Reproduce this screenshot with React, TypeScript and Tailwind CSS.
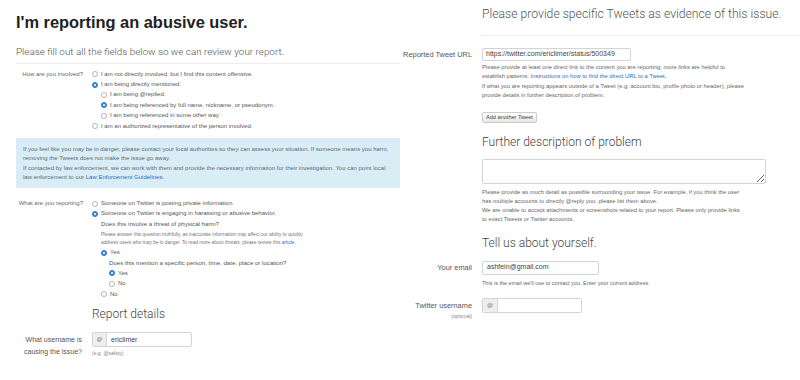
import React from 'react';

const Radio: React.FC<{ checked?: boolean }> = ({ checked }) =>
  checked ? (
    <span className="w-[6px] h-[6px] rounded-full bg-[#3b8bea] border border-[#2c74d1] flex items-center justify-center shrink-0">
      <span className="w-[2px] h-[2px] rounded-full bg-white" />
    </span>
  ) : (
    <span className="w-[6px] h-[6px] rounded-full bg-white border border-[#b5b5b5] shrink-0" />
  );

const RadioRow: React.FC<{ checked?: boolean; level?: number; children: React.ReactNode }> = ({
  checked,
  level = 0,
  children,
}) => {
  const indent = level === 0 ? 'pl-0' : level === 1 ? 'pl-[9px]' : 'pl-[17px]';
  return (
    <div className={`flex items-center h-[10.4px] gap-[3px] ${indent}`}>
      <Radio checked={checked} />
      <span className="whitespace-nowrap">{children}</span>
    </div>
  );
};

export default function App() {
  return (
    <div className="w-[800px] h-[380px] bg-white flex overflow-hidden font-['Liberation_Sans',Arial,sans-serif] text-[#555]">
      {/* LEFT: report form */}
      <div className="w-[400px] pl-[16px] flex flex-col">
        <h1 className="mt-[13px] text-[16.4px] leading-[18px] font-bold text-[#222]">
          I'm reporting an abusive user.
        </h1>
        <p className="mt-[15px] pb-[5px] border-b border-[#eeeeee] text-[9.9px] leading-[12px] font-['Roboto',sans-serif] font-light text-[#555]">
          Please fill out all the fields below so we can review your report.
        </p>

        {/* How are you involved */}
        <div className="flex mt-[5px] text-[6px]">
          <div className="w-[68px] pr-[1px] text-right h-[10.4px] leading-[10.4px] text-[#666]">How are you involved?</div>
          <div className="ml-[8px] flex flex-col">
            <RadioRow>I am not directly involved, but I find this content offensive.</RadioRow>
            <RadioRow checked>I am being directly mentioned.</RadioRow>
            <RadioRow level={1}>I am being @replied.</RadioRow>
            <RadioRow level={1} checked>
              I am being referenced by full name, nickname, or pseudonym.
            </RadioRow>
            <RadioRow level={1}>I am being referenced in some other way.</RadioRow>
            <RadioRow>I am an authorized representative of the person involved.</RadioRow>
          </div>
        </div>

        {/* Info box */}
        <div className="mt-[7px] h-[50px] bg-[#d9edf7] pl-[7px] pr-[4px] pt-[7px] text-[6px] leading-[9px] text-[#5f6b73] whitespace-nowrap">
          <p>
            If you feel like you may be in danger, please contact your local authorities so they can assess your
            situation. If someone means you harm,
            <br />
            removing the Tweets does not make the issue go away.
          </p>
          <p className="mt-[1px]">
            If contacted by law enforcement, we can work with them and provide the necessary information for their
            investigation. You can point local
            <br />
            law enforcement to our <span className="text-[#2a6ebb]">Law Enforcement Guidelines</span>.
          </p>
        </div>

        {/* What are you reporting */}
        <div className="flex mt-[10px] text-[6px]">
          <div className="w-[68px] pr-[1px] text-right h-[10.4px] leading-[10.4px] text-[#666]">What are you reporting?</div>
          <div className="ml-[8px] flex flex-col">
            <RadioRow>Someone on Twitter is posting private information.</RadioRow>
            <RadioRow checked>Someone on Twitter is engaging in harassing or abusive behavior.</RadioRow>
            <div className="pl-[9px] h-[10.4px] leading-[10.4px] text-[6.1px] text-[#555]">
              Does this involve a threat of physical harm?
            </div>
            <div className="pl-[9px] pt-[1px] pb-[1px] text-[4.8px] leading-[8px] text-[#777]">
              Please answer this question truthfully, as inaccurate information may affect our ability to quickly
              <br />
              address users who may be in danger. To read more about threats, please review this{' '}
              <span className="text-[#2a6ebb]">article</span>.
            </div>
            <RadioRow level={1} checked>
              Yes
            </RadioRow>
            <div className="pl-[17px] h-[10.4px] leading-[10.4px] text-[6.1px] text-[#555]">
              Does this mention a specific person, time, date, place or location?
            </div>
            <RadioRow level={2} checked>
              Yes
            </RadioRow>
            <RadioRow level={2}>No</RadioRow>
            <RadioRow level={1}>No</RadioRow>
          </div>
        </div>

        {/* Report details */}
        <h2 className="mt-[7px] ml-[76px] text-[12px] leading-[16px] font-['Roboto',sans-serif] font-light text-[#444]">
          Report details
        </h2>
        <div className="flex mt-[10px]">
          <div className="w-[66px] text-right text-[7px] leading-[12px] pt-[2px] text-[#555]">
            What username is
            <br />
            causing the issue?
          </div>
          <div className="ml-[10px] flex flex-col">
            <div className="flex w-[100px] h-[15px] border border-[#d4d4d4] rounded-[2px] overflow-hidden">
              <span className="w-[14px] bg-[#eeeeee] border-r border-[#d4d4d4] flex items-center justify-center text-[6px] text-[#777]">
                @
              </span>
              <span className="flex items-center pl-[4px] text-[7px] text-[#444]">ericlimer</span>
            </div>
            <span className="mt-[3px] text-[5px] text-[#888]">(e.g. @safety)</span>
          </div>
        </div>
      </div>

      {/* RIGHT: evidence + contact */}
      <div className="w-[400px] flex flex-col">
        <div className="ml-[82px] pt-[6px] pb-[13px] border-b border-[#eeeeee]">
          <h2 className="text-[12.2px] leading-[16px] font-['Roboto',sans-serif] font-light text-[#555] whitespace-nowrap">
            Please provide specific Tweets as evidence of this issue.
          </h2>
        </div>

        <div className="flex mt-[12px]">
          <div className="w-[72px] text-right text-[7.4px] leading-[13px] text-[#555] whitespace-nowrap">
            Reported Tweet URL
          </div>
          <div className="ml-[10px] flex flex-col w-[290px]">
            <div className="w-[149px] h-[13px] border border-[#d4d4d4] rounded-[2px] flex items-center pl-[3px] overflow-hidden">
              <span className="text-[7px] text-[#444] whitespace-nowrap">
                https://twitter.com/ericlimer/status/500349
              </span>
            </div>
            <p className="mt-[2px] text-[5.8px] leading-[9.4px] text-[#666] whitespace-nowrap">
              Please provide at least one direct link to the content you are reporting; more links are helpful to
              <br />
              establish patterns. <span className="text-[#2a6ebb]">Instructions on how to find the direct URL to a Tweet.</span>
              <br />
              If what you are reporting appears outside of a Tweet (e.g. account bio, profile photo or header), please
              <br />
              provide details in further description of problem.
            </p>
            <button className="mt-[11px] self-start h-[11px] px-[3px] border border-[#ccc] rounded-[2px] bg-gradient-to-b from-[#ffffff] to-[#e6e6e6] text-[5.6px] leading-[9px] text-[#444]">
              Add another Tweet
            </button>

            <h2 className="mt-[11px] text-[12px] leading-[16px] font-['Roboto',sans-serif] font-light text-[#444]">
              Further description of problem
            </h2>
            <textarea
              readOnly
              className="mt-[9px] w-[284px] h-[25px] border border-[#d4d4d4] rounded-[2px] bg-white"
            />
            <p className="mt-[4px] text-[5.8px] leading-[9px] text-[#666] whitespace-nowrap">
              Please provide as much detail as possible surrounding your issue. For example, if you think the user
              <br />
              has multiple accounts to directly @reply you, please list them above.
              <br />
              We are unable to accept attachments or screenshots related to your report. Please only provide links
              <br />
              to exact Tweets or Twitter accounts.
            </p>

            <h2 className="mt-[11px] text-[12px] leading-[16px] font-['Roboto',sans-serif] font-light text-[#444]">
              Tell us about yourself.
            </h2>
          </div>
        </div>

        <div className="flex mt-[10px]">
          <div className="w-[72px] text-right text-[7.4px] leading-[14px] text-[#555]">Your email</div>
          <div className="ml-[10px] flex flex-col">
            <div className="w-[117px] h-[14px] border border-[#d4d4d4] rounded-[2px] flex items-center pl-[4px]">
              <span className="text-[7px] text-[#444]">ashfein@gmail.com</span>
            </div>
            <p className="mt-[4px] text-[5.5px] leading-[8px] text-[#666] whitespace-nowrap">
              This is the email we'll use to contact you. Enter your current address.
            </p>
          </div>
        </div>

        <div className="flex mt-[11px]">
          <div className="w-[72px] text-right text-[#555]">
            <div className="text-[7.4px] leading-[15px]">Twitter username</div>
            <div className="text-[5px] leading-[5px] mt-[1px] text-[#888]">(optional)</div>
          </div>
          <div className="ml-[10px]">
            <div className="flex w-[100px] h-[15px] border border-[#d4d4d4] rounded-[2px] overflow-hidden">
              <span className="w-[15px] bg-[#eeeeee] border-r border-[#d4d4d4] flex items-center justify-center text-[6px] text-[#777]">
                @
              </span>
              <span className="flex-1 bg-white" />
            </div>
          </div>
        </div>
      </div>
    </div>
  );
}
